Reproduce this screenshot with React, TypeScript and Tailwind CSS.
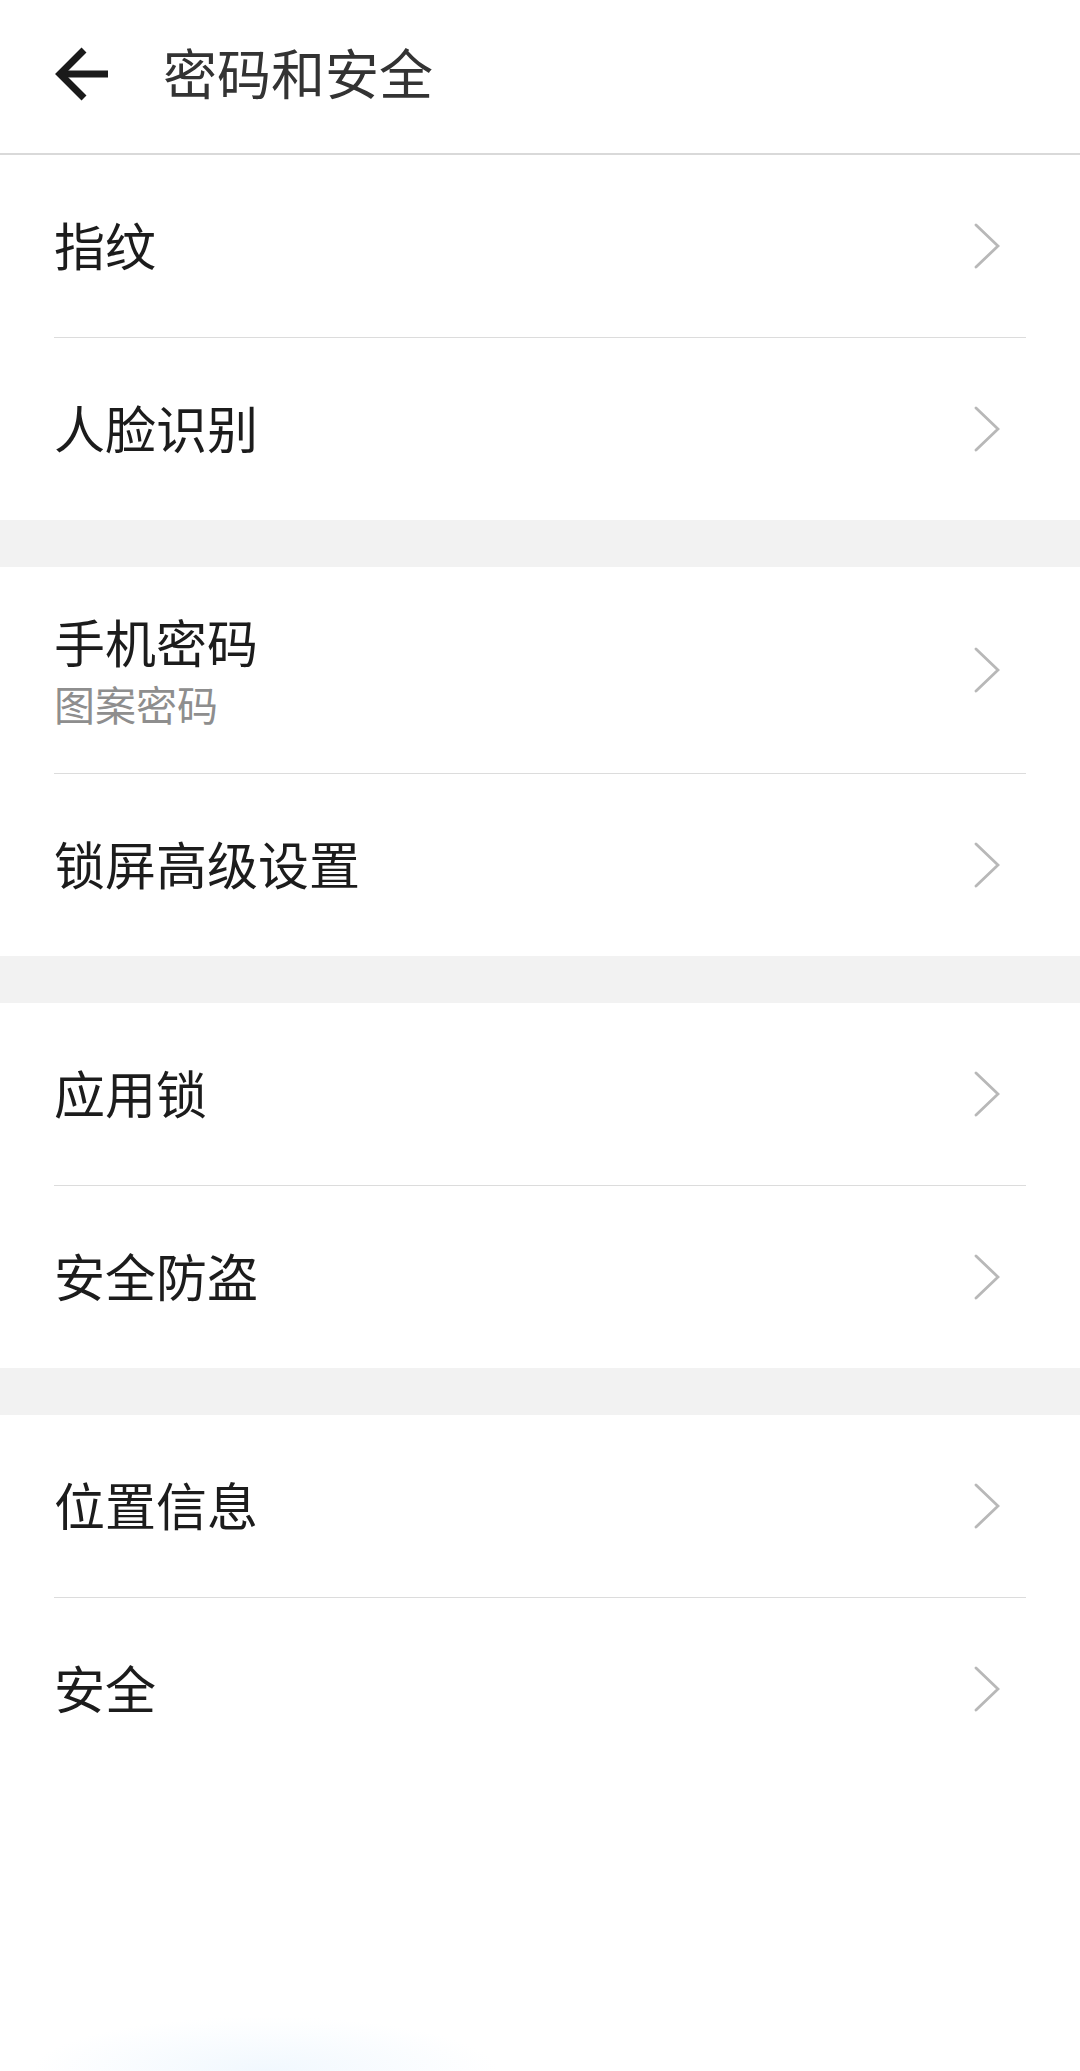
import React from "react";

type Item = {
  title: string;
  subtitle?: string;
};

const groups: Item[][] = [
  [{ title: "指纹" }, { title: "人脸识别" }],
  [{ title: "手机密码", subtitle: "图案密码" }, { title: "锁屏高级设置" }],
  [{ title: "应用锁" }, { title: "安全防盗" }],
  [{ title: "位置信息" }, { title: "安全" }],
];

function BackArrow() {
  return (
    <svg width="62" height="60" viewBox="0 0 62 60" fill="none">
      <path d="M10 30H58" stroke="#1a1a1a" strokeWidth="7" />
      <path
        d="M34 6L10 30L34 54"
        stroke="#1a1a1a"
        strokeWidth="7"
        strokeLinejoin="miter"
      />
    </svg>
  );
}

function Chevron() {
  return (
    <svg width="26" height="46" viewBox="0 0 26 46" fill="none">
      <path
        d="M2 2L24 23L2 44"
        stroke="#b8b8b8"
        strokeWidth="2.8"
        strokeLinecap="round"
        strokeLinejoin="miter"
      />
    </svg>
  );
}

function Row({ item }: { item: Item }) {
  return (
    <div
      className={`flex items-center justify-between pl-[54px] pr-[80px] ${
        item.subtitle ? "h-[206px]" : "h-[182px]"
      }`}
    >
      <div className="flex flex-col mb-[5px]">
        <span
          className={`text-[51px] text-[#1c1c1c] ${
            item.subtitle ? "leading-[70px]" : "leading-[60px]"
          }`}
        >
          {item.title}
        </span>
        {item.subtitle && (
          <span className="text-[41px] leading-[54px] text-[#8e8e8e]">
            {item.subtitle}
          </span>
        )}
      </div>
      <Chevron />
    </div>
  );
}

export default function App() {
  return (
    <div className="relative w-[1080px] h-[2071px] overflow-hidden bg-white font-['Noto_Sans_CJK_SC','Noto_Sans',sans-serif]">
      {/* Top bar */}
      <header className="flex items-center h-[155px] border-b-2 border-[#d9d9d9] pl-[50px] pb-[6px]">
        <BackArrow />
        <h1 className="ml-[51px] mb-[4px] text-[54px] leading-none font-normal text-[#333333]">
          密码和安全
        </h1>
      </header>

      {groups.map((group, gi) => (
        <div key={gi}>
          {gi > 0 && <div className="h-[47px] bg-[#f2f2f2]" />}
          {group.map((item, i) => (
            <div key={item.title}>
              {i > 0 && <div className="mx-[54px] h-px bg-[#dcdcdc]" />}
              <Row item={item} />
            </div>
          ))}
        </div>
      ))}

      {/* faint glow at the bottom edge */}
      <div className="absolute left-[30px] bottom-[-55px] w-[470px] h-[110px] bg-[radial-gradient(ellipse_at_center,#f1f8fe_0%,rgba(255,255,255,0)_70%)]" />
    </div>
  );
}
